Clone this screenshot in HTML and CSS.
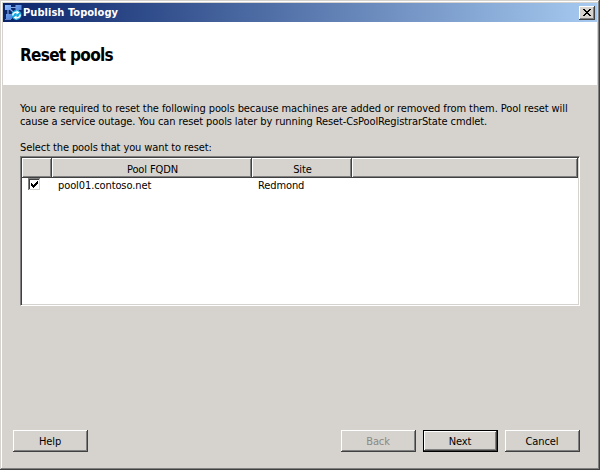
FILE: index.html
```html
<!DOCTYPE html>
<html lang="en">
<head>
<meta charset="utf-8">
<title>Publish Topology</title>
<link rel="stylesheet" href="styles.css">
</head>
<body>
<main class="window">
  <header class="titlebar">
    <svg class="app-icon" width="17" height="17" viewBox="0 0 17 17">
      <defs><linearGradient id="node" x2="1" y2="1"><stop offset="0" stop-color="#8dbcff"/><stop offset="1" stop-color="#3267c8"/></linearGradient></defs>
      <path d="M6 3.5h5M3 6v4M5 5l5 5M13 6v3" stroke="#86a9df" stroke-width="1.2" fill="none"/>
      <path d="M0 1h6v5H0zM10.500 1h6v5h-6zM1 10h6v5H1z" fill="url(#node)"/>
      <path d="M0 15.5h6" stroke="#5e83c6"/>
      <circle cx="11.500" cy="11" r="5" fill="#16a9df"/>
      <path d="M7.800 11.500c0-2.500 2-3.500 4-3M15.200 10.500c0 2.500-2 3.500-4 3" stroke="#fff" stroke-width="1.500" fill="none"/>
      <path d="M11.500 6.200l3 2.300-3 2zM11.500 15.800l-3-2.300 3-2z" fill="#fff"/>
    </svg>
    <span class="title">Publish Topology</span>
    <button class="close" aria-label="Close"><svg width="8" height="7" viewBox="0 0 8 7" shape-rendering="crispEdges"><path d="M0 0h2v1h1v1h2V1h1V0h2v1H7v1H6v1H5v1h1v1h1v1h1v1H6V6H5V5H3v1H2v1H0V6h1V5h1V4h1V3H2V2H1V1H0z"/></svg></button>
  </header>
  <section class="banner"><h1>Reset pools</h1></section>
  <section class="content">
    <p class="message"><span class="line1">You are required to reset the following pools because machines are added or removed from them. Pool reset will</span><br><span class="line2">cause a service outage. You can reset pools later by running Reset-CsPoolRegistrarState cmdlet.</span></p>
    <p class="label"><span>Select the pools that you want to reset:</span></p>
    <div class="list">
      <div class="head"><div></div><div><span>Pool FQDN</span></div><div><span>Site</span></div><div></div></div>
      <div class="row">
        <div class="check"><svg width="7" height="7" viewBox="0 0 7 7" shape-rendering="crispEdges"><path d="M0 2h1v1h1v1h1V3h1V2h1V1h1V0h1v3H6v1H5v1H4v1H3v1H2V6H1V5H0z"/></svg></div>
        <div class="cell"><span>pool01.contoso.net</span></div>
        <div class="cell"><span>Redmond</span></div>
      </div>
    </div>
  </section>
  <footer class="actions">
    <button class="btn help"><span>Help</span></button>
    <button class="btn back" disabled><span>Back</span></button>
    <button class="btn next"><span>Next</span></button>
    <button class="btn cancel"><span>Cancel</span></button>
  </footer>
</main>
</body>
</html>
```
FILE: styles.css
```css
* { box-sizing: border-box; }
body { margin: 0; font: 11px/13px "DejaVu Sans Condensed", "DejaVu Sans", sans-serif; font-stretch: condensed; color: #000; }
h1, p { margin: 0; }
span { white-space: nowrap; }
svg { display: block; }
button { font: inherit; padding: 0; margin: 0; color: #000; background: #d6d3ce; border: 0; border-radius: 0; }
.window { width: 600px; height: 470px; display: flex; flex-direction: column; background: #d6d3ce; padding: 3px; box-shadow: inset -1px -1px #404040, inset 1px 1px #d6d3ce, inset -2px -2px #808080, inset 2px 2px #fff; }
.titlebar { height: 19px; display: flex; align-items: center; padding: 0 2px; background: linear-gradient(90deg, #0a246a, #a6caf0); color: #fff; font-weight: bold; }
.app-icon { flex: none; margin-right: 1px; }
.title { letter-spacing: .05px; }
.close { width: 16px; height: 14px; margin-left: auto; display: flex; justify-content: center; align-items: center; box-shadow: inset -1px -1px #404040, inset 1px 1px #fff, inset -2px -2px #808080; }
.banner { height: 63px; background: #fff; padding: 22px 17px 0; }
h1 { font-size: 17px; line-height: 22px; font-weight: bold; letter-spacing: -.7px; }
.content { padding: 17px 17px 0; height: 221px; }
.message { height: 39px; }
.line1 { letter-spacing: -.083px; }
.line2, .label { letter-spacing: -.105px; }
.label { height: 15px; }
.list { width: 560px; height: 150px; background: #fff; border: 1px solid; border-color: #808080 #fff #fff #808080; box-shadow: inset 1px 1px #404040, inset -1px -1px #d6d3ce; padding: 1px; letter-spacing: -.1px; }
.head { display: grid; grid-template-columns: 30px 200px 100px 226px; height: 20px; }
.head div { background: #d6d3ce; text-align: center; padding: 5px 0 0 1px; box-shadow: inset -1px -1px #404040, inset 1px 1px #fff, inset -2px -2px #808080; }
.row { display: grid; grid-template-columns: 30px 200px 100px; height: 14px; }
.cell { padding: 1px 0 0 6px; }
.check { width: 12px; height: 12px; margin-left: 6px; background: #fff; display: flex; align-items: center; justify-content: center; box-shadow: inset 1px 1px #808080, inset -1px -1px #d6d3ce, inset 2px 2px #404040; }
.actions { display: flex; margin-top: auto; padding: 0 17px 15px 10px; }
.btn { width: 75px; height: 22px; letter-spacing: -.1px; padding-right: 1px; box-shadow: inset -1px -1px #404040, inset 1px 1px #fff, inset -2px -2px #808080; }
.back { margin-left: auto; color: #8b8985; }
.next { margin: 0 7px; border: 1px solid #000; }
```
